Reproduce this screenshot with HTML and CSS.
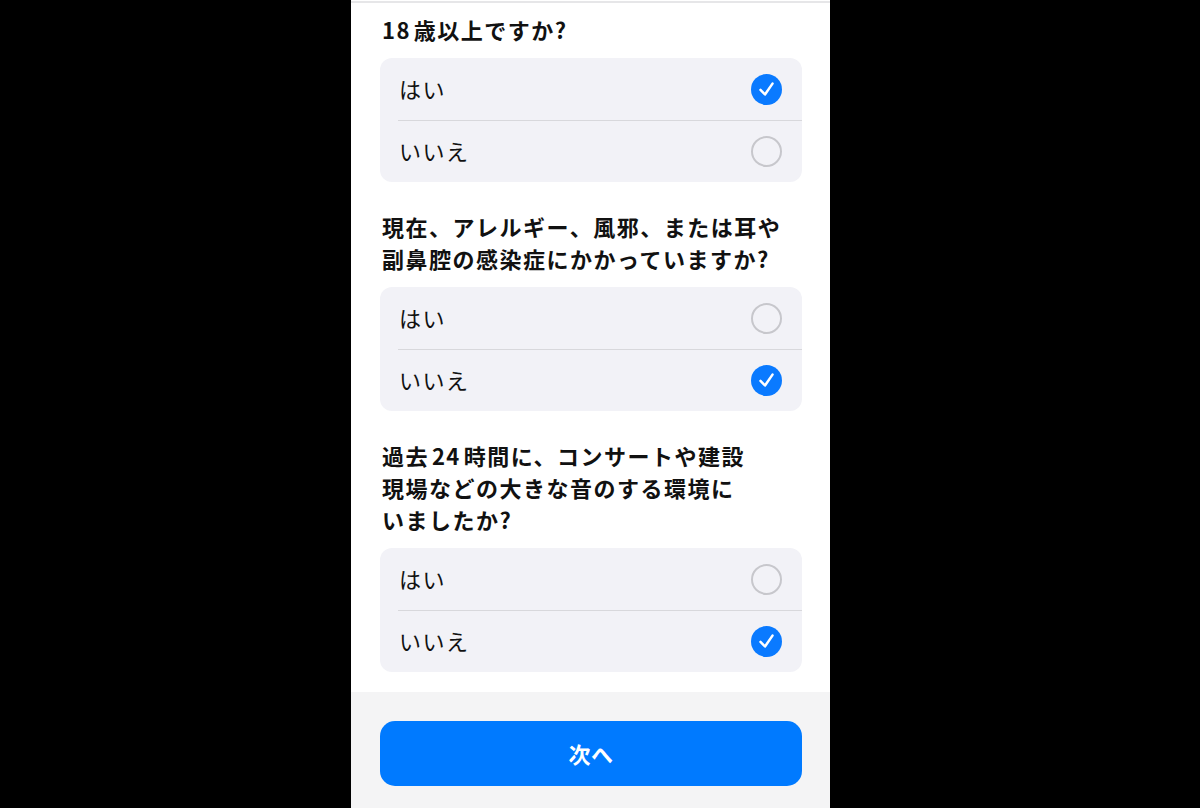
FILE: index.html
```html
<!DOCTYPE html>
<html lang="ja">
<head>
<meta charset="utf-8">
<title>質問</title>
<link rel="stylesheet" href="styles.css">
</head>
<body>
<div class="stage">
  <div class="phone">
    <div class="topline"></div>
    <main class="content">
      <section class="question">
        <h2 class="q-title">18&#8202;歳以上ですか?</h2>
        <div class="card">
          <div class="option"><span class="label">はい</span><svg class="mark" viewBox="0 0 31 31"><circle cx="15.5" cy="15.5" r="15.5" fill="#0a7aff"/><path d="M9.5 15.8 L14 20.5 L21.5 9.6" fill="none" stroke="#fff" stroke-width="2.5" stroke-linecap="round" stroke-linejoin="round"/></svg></div>
          <div class="option"><span class="label">いいえ</span><span class="radio"></span></div>
        </div>
      </section>
      <section class="question">
        <h2 class="q-title">現在、アレルギー、風邪、または耳や<br>副鼻腔の感染症にかかっていますか?</h2>
        <div class="card">
          <div class="option"><span class="label">はい</span><span class="radio"></span></div>
          <div class="option"><span class="label">いいえ</span><svg class="mark" viewBox="0 0 31 31"><circle cx="15.5" cy="15.5" r="15.5" fill="#0a7aff"/><path d="M9.5 15.8 L14 20.5 L21.5 9.6" fill="none" stroke="#fff" stroke-width="2.5" stroke-linecap="round" stroke-linejoin="round"/></svg></div>
        </div>
      </section>
      <section class="question">
        <h2 class="q-title">過去&#8202;24&#8202;時間に、コンサートや建設<br>現場などの大きな音のする環境に<br>いましたか?</h2>
        <div class="card">
          <div class="option"><span class="label">はい</span><span class="radio"></span></div>
          <div class="option"><span class="label">いいえ</span><svg class="mark" viewBox="0 0 31 31"><circle cx="15.5" cy="15.5" r="15.5" fill="#0a7aff"/><path d="M9.5 15.8 L14 20.5 L21.5 9.6" fill="none" stroke="#fff" stroke-width="2.5" stroke-linecap="round" stroke-linejoin="round"/></svg></div>
        </div>
      </section>
    </main>
    <footer class="footer">
      <button class="next" type="button">次へ</button>
    </footer>
  </div>
</div>
</body>
</html>
```
FILE: styles.css
```css
html, body {
  margin: 0;
  padding: 0;
  background: #000;
}
body {
  font-family: "Noto Sans CJK JP", "Noto Sans", sans-serif;
  color: #000;
}
.stage {
  width: 1200px;
  height: 808px;
  padding-left: 351px;
  box-sizing: border-box;
}
.phone {
  width: 479px;
  height: 808px;
  background: #fff;
  display: flex;
  flex-direction: column;
}
.topline {
  height: 3px;
  box-sizing: border-box;
  border-bottom: 2px solid #e6e6e8;
}
.content {
  flex: 1;
  padding: 11px 28px 0 29px;
  display: flex;
  flex-direction: column;
  gap: 29px;
}
.question {
  display: flex;
  flex-direction: column;
  gap: 12px;
}
.q-title {
  margin: -1px 0 1px 2px;
  font-size: 22px;
  line-height: 32px;
  font-weight: 700;
  letter-spacing: 1.5px;
  color: #111;
}
.card {
  background: #f2f2f7;
  border-radius: 12px;
  overflow: hidden;
}
.option {
  height: 62px;
  margin-left: 18px;
  padding-right: 20px;
  display: flex;
  align-items: center;
  justify-content: space-between;
  box-sizing: border-box;
}
.option + .option {
  border-top: 1px solid #d8d8dc;
}
.label {
  font-size: 22px;
  line-height: 30px;
  letter-spacing: 1.5px;
  padding: 0 0 3px 1px;
  color: #111;
}
.mark {
  width: 31px;
  height: 31px;
  display: block;
}
.radio {
  width: 31px;
  height: 31px;
  box-sizing: border-box;
  border: 2px solid #c7c7cc;
  border-radius: 50%;
}
.footer {
  height: 116px;
  background: #f4f4f5;
  padding: 29px 28px 0 29px;
  box-sizing: border-box;
}
.next {
  width: 100%;
  height: 65px;
  border: 0;
  border-radius: 15px;
  background: #007aff;
  color: #fff;
  font-family: "Noto Sans CJK JP", "Noto Sans", sans-serif;
  font-size: 22px;
  font-weight: 700;
  letter-spacing: 0.5px;
  padding-bottom: 2px;
}
```
